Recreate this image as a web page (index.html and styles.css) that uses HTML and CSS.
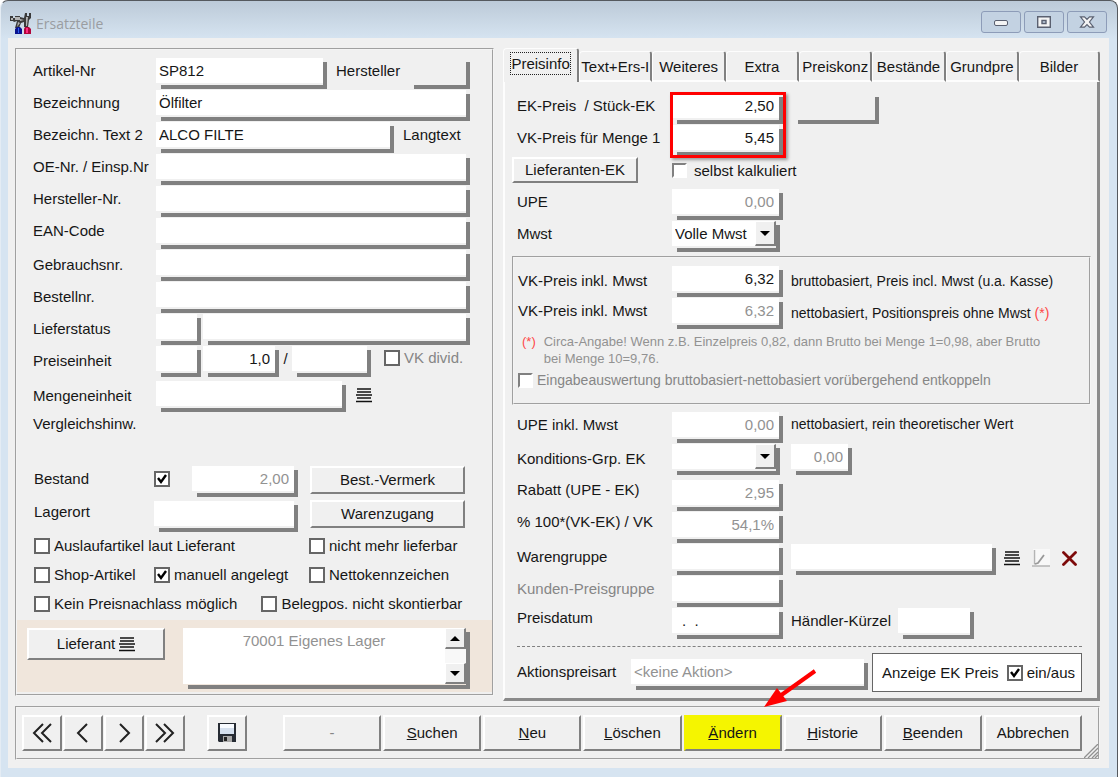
FILE: index.html
```html
<!DOCTYPE html>
<html lang="de">
<head>
<meta charset="utf-8">
<title>Ersatzteile</title>
<link rel="stylesheet" href="styles.css">
</head>
<body>
<div class="window">
  <header class="titlebar">
    <svg class="app-icon" viewBox="0 0 21 21" width="21" height="21" aria-hidden="true">
      <path d="M0 3h3v2h2V3h5v1l4 1 1-5h2v3h2V0h2v5l-2 2-1 7h-4V9l-3 1-2 5H5l2-7-3 1-1-1H0z" fill="#3a3a3a"/>
      <path d="M1 5h2v2H1zM5 4h5v3H5zM10 6l4 1-4 1zM16 4h2l-1 9h-1zM8 9l2 1-3 4z" fill="#b4b4b4"/>
      <path d="M5 21v-5l2-2h3l2 2v5z" fill="#0a1390"/><path d="M8 15h1v5H8z" fill="#2a62f0"/>
      <path d="M14 21v-5l1-2h4l2 2v5z" fill="#b0063a"/><path d="M16 15h2v5h-2z" fill="#ff2b83"/>
    </svg>
    <h1 class="title">Ersatzteile</h1>
    <div class="win-buttons">
      <button class="win-btn" aria-label="Minimieren"><svg viewBox="0 0 16 12" width="16" height="12"><rect x="1.500" y="4.500" width="13" height="5" rx="1.500" fill="#f4f4f4" stroke="#5a6070"/></svg></button>
      <button class="win-btn" aria-label="Maximieren"><svg viewBox="0 0 16 12" width="16" height="12"><path d="M1.700.7h12.600v10.600H1.700zM6 4.500v3h4v-3z" fill="#f4f4f4" stroke="#5a6070" fill-rule="evenodd" stroke-width="1.400"/></svg></button>
      <button class="win-btn" aria-label="Schließen"><svg viewBox="0 0 16 12" width="16" height="12"><path d="M1.500.8h4L8 3.300 10.500.8h4L10.500 6l4 5.200h-4L8 8.700l-2.500 2.500h-4L5.500 6z" fill="#f4f4f4" stroke="#5a6070" stroke-width="1.200"/></svg></button>
    </div>
  </header>

  <div class="content">
    <main class="columns">
      <section class="panel article">
        <div class="form">
          <div class="row"><label class="lbl" for="nr">Artikel-Nr</label><span class="field w-nr"><input id="nr" value="SP812"></span><label class="lbl-mid" for="her">Hersteller</label><span class="field flat push w-56"><input id="her"></span></div>
          <div class="row"><label class="lbl" for="bez">Bezeichnung</label><span class="field grow"><input id="bez" value="Ölfilter"></span></div>
          <div class="row"><label class="lbl" for="bez2">Bezeichn. Text 2</label><span class="field w-bez"><input id="bez2" value="ALCO FILTE"></span><span class="lbl-mid">Langtext</span></div>
          <div class="row"><label class="lbl" for="oe">OE-Nr. / Einsp.Nr</label><span class="field grow"><input id="oe"></span></div>
          <div class="row"><label class="lbl" for="hnr">Hersteller-Nr.</label><span class="field grow"><input id="hnr"></span></div>
          <div class="row"><label class="lbl" for="ean">EAN-Code</label><span class="field grow"><input id="ean"></span></div>
          <div class="row low"><label class="lbl" for="geb">Gebrauchsnr.</label><span class="field grow"><input id="geb"></span></div>
          <div class="row low"><label class="lbl" for="bnr">Bestellnr.</label><span class="field grow"><input id="bnr"></span></div>
          <div class="row low"><label class="lbl" for="ls">Lieferstatus</label><span class="field w-46"><input id="ls"></span><span class="field grow"><input aria-label="Lieferstatus Text"></span></div>
          <div class="row low"><label class="lbl" for="pe">Preiseinheit</label><span class="field w-46"><input id="pe"></span><span class="field w-76"><input class="num" value="1,0" aria-label="Menge"></span><span class="slash">/</span><span class="field w-80"><input aria-label="Einheit"></span><label class="check gray vk"><input type="checkbox" class="box">VK divid.</label></div>
          <div class="row low unit"><label class="lbl" for="me">Mengeneinheit</label><span class="field w-unit"><input id="me"></span>
            <button class="icon-btn" aria-label="Liste"><svg viewBox="0 0 16 15" width="16" height="15" stroke="#111" stroke-width="1.400"><path d="M1 1h14M0 7h16M0 13.500h16M1 4h14M1 10h14"/></svg></button></div>
          <div class="compare">Vergleichshinw.</div>

          <div class="stock">
            <div class="stock-fields">
              <div class="row"><label class="lbl-s" for="bst">Bestand</label><input type="checkbox" class="box" checked aria-label="Bestand führen"><span class="field push w-106"><input id="bst" class="num dim" value="2,00"></span></div>
              <div class="row"><label class="lbl-s up" for="lag">Lagerort</label><span class="field grow"><input id="lag"></span></div>
            </div>
            <div class="stock-buttons"><button class="btn">Best.-Vermerk</button><button class="btn">Warenzugang</button></div>
          </div>
          <div class="checks">
            <label class="check span2"><input type="checkbox" class="box">Auslaufartikel laut Lieferant</label><label class="check"><input type="checkbox" class="box">nicht mehr lieferbar</label>
            <label class="check"><input type="checkbox" class="box">Shop-Artikel</label><label class="check"><input type="checkbox" class="box" checked>manuell angelegt</label><label class="check"><input type="checkbox" class="box">Nettokennzeichen</label>
            <div class="check-pair"><label class="check"><input type="checkbox" class="box">Kein Preisnachlass möglich</label><label class="check"><input type="checkbox" class="box">Belegpos. nicht skontierbar</label></div>
          </div>
        </div>
        <div class="supplier">
          <button class="btn btn-sup">Lieferant <svg viewBox="0 0 16 15" width="16" height="15" stroke="#111" stroke-width="1.400"><path d="M1 1h14M1 4h14M0 7h16M1 10h14M0 13.500h16"/></svg></button>
          <span class="field memo"><textarea aria-label="Lieferant" rows="3">70001 Eigenes Lager</textarea>
            <span class="scroll"><button class="spin" aria-label="Nach oben"><svg viewBox="0 0 10 5" width="10" height="5"><path d="M5 0l5 5H0z"/></svg></button><button class="spin" aria-label="Nach unten"><svg viewBox="0 0 10 5" width="10" height="5"><path d="M0 0h10L5 5z"/></svg></button></span></span>
        </div>
      </section>

      <section class="prices">
        <nav class="tabs">
          <button class="tab active"><span>Preisinfo</span></button><button class="tab">Text+Ers-I</button><button class="tab">Weiteres</button><button class="tab">Extra</button><button class="tab">Preiskonz</button><button class="tab">Bestände</button><button class="tab">Grundpre</button><button class="tab last">Bilder</button>
        </nav>
        <div class="tab-body">
          <div class="marked">
            <div class="row"><label class="lbl-r" for="ek">EK-Preis&nbsp; / Stück-EK</label><span class="field w-112"><input id="ek" class="num" value="2,50"></span><span class="field flat w-86"><input aria-label="Stück-EK"></span></div>
            <div class="row"><label class="lbl-r" for="vk">VK-Preis für Menge 1</label><span class="field w-112"><input id="vk" class="num" value="5,45"></span></div>
            <div class="mark"></div>
          </div>
          <div class="row calc"><span class="lbl-r"><button class="btn btn-ek">Lieferanten-EK</button></span><label class="check wide"><input type="checkbox" class="sunken">selbst kalkuliert</label></div>
          <div class="row"><label class="lbl-r" for="upe">UPE</label><span class="field w-112"><input id="upe" class="num dim" value="0,00"></span></div>
          <div class="row"><label class="lbl-r" for="mw">Mwst</label><span class="field combo"><select id="mw"><option>Volle Mwst</option></select><span class="spin drop"><svg viewBox="0 0 10 5" width="10" height="5"><path d="M0 0h10L5 5z"/></svg></span></span></div>

          <div class="group">
            <div class="row low"><label class="lbl-r" for="v1">VK-Preis inkl. Mwst</label><span class="field w-112"><input id="v1" class="num" value="6,32"></span><span class="note">bruttobasiert, Preis incl. Mwst (u.a. Kasse)</span></div>
            <div class="row"><label class="lbl-r" for="v2">VK-Preis inkl. Mwst</label><span class="field w-112"><input id="v2" class="num dim" value="6,32"></span><span class="note">nettobasiert, Positionspreis ohne Mwst <span class="star">(*)</span></span></div>
            <div class="hint"><span class="star">(*)</span><p>Circa-Angabe! Wenn z.B. Einzelpreis 0,82, dann Brutto bei Menge 1=0,98, aber Brutto<br>bei Menge 10=9,76.</p></div>
            <label class="check small gray"><input type="checkbox" class="sunken">Eingabeauswertung bruttobasiert-nettobasiert vorübergehend entkoppeln</label>
          </div>

          <div class="row"><label class="lbl-r" for="ui">UPE inkl. Mwst</label><span class="field w-112"><input id="ui" class="num dim" value="0,00"></span><span class="note tight">nettobasiert, rein theoretischer Wert</span></div>
          <div class="row low terms"><label class="lbl-r" for="kg">Konditions-Grp. EK</label><span class="field combo"><select id="kg"><option></option></select><span class="spin drop"><svg viewBox="0 0 10 5" width="10" height="5"><path d="M0 0h10L5 5z"/></svg></span></span><span class="field w-60"><input class="num dim" value="0,00" aria-label="Kondition"></span></div>
          <div class="row high"><label class="lbl-r" for="rb">Rabatt (UPE - EK)</label><span class="field w-112"><input id="rb" class="num dim" value="2,95"></span></div>
          <div class="row high"><label class="lbl-r" for="pc">% 100*(VK-EK) / VK</label><span class="field w-112"><input id="pc" class="num dim" value="54,1%"></span></div>
          <div class="row"><label class="lbl-r" for="wg">Warengruppe</label><span class="field w-112"><input id="wg"></span><span class="field grow"><input aria-label="Warengruppe Text"></span>
            <span class="tools">
              <button class="icon-btn" aria-label="Liste"><svg viewBox="0 0 16 15" width="16" height="15" stroke="#111" stroke-width="1.400"><path d="M1 1h14M1 4h14M0 7h16M1 10h14M0 13.500h16"/></svg></button>
              <button class="icon-btn" aria-label="Bearbeiten"><svg viewBox="0 0 18 18" width="18" height="18" fill="none"><path d="M1 0h17v17H1z" fill="#f8f8f8"/><path d="M2.500 1v14.500M0 17h18" stroke="#b4b4b4" stroke-width="1.500"/><path d="M3 15l3-1 6-8" stroke="#999" stroke-width="1.800"/></svg></button>
              <button class="icon-btn" aria-label="Löschen"><svg viewBox="0 0 15 15" width="15" height="15"><path d="M1.500 1.500l12 12M13.500 1.500l-12 12" stroke="#7d0a0a" stroke-width="2.800" stroke-linecap="round"/></svg></button>
            </span></div>
          <div class="row"><label class="lbl-r gray" for="kp">Kunden-Preisgruppe</label><span class="field w-112"><input id="kp"></span></div>
          <div class="row high"><label class="lbl-r" for="pd">Preisdatum</label><span class="field w-112"><input id="pd" class="date" value=".  ."></span><label class="dealer" for="hk">Händler-Kürzel</label><span class="field w-76"><input id="hk"></span></div>
          <div class="promo">
            <label class="lbl-p" for="ak">Aktionspreisart</label><span class="field grow"><input id="ak" class="dim" value="&lt;keine Aktion&gt;"></span>
            <div class="ek-toggle"><span>Anzeige EK Preis</span><label class="check"><input type="checkbox" class="box" checked>ein/aus</label></div>
          </div>
        </div>
      </section>
    </main>

    <footer class="toolbar">
      <div class="nav">
        <button class="btn" aria-label="Erster"><svg viewBox="0 0 20 20" width="20" height="20"><path d="M11 1L2 10l9 9M19 1l-9 9 9 9"/></svg></button>
        <button class="btn" aria-label="Zurück"><svg viewBox="0 0 20 20" width="20" height="20"><path d="M14 1l-9 9 9 9"/></svg></button>
        <button class="btn" aria-label="Weiter"><svg viewBox="0 0 20 20" width="20" height="20"><path d="M6 1l9 9-9 9"/></svg></button>
        <button class="btn" aria-label="Letzter"><svg viewBox="0 0 20 20" width="20" height="20"><path d="M1 1l9 9-9 9M9 1l9 9-9 9"/></svg></button>
      </div>
      <button class="btn save" aria-label="Speichern"><svg class="disk" viewBox="0 0 20 20" width="20" height="20"><path d="M1 0h18v19H2l-1-1z" fill="#262b33"/><path d="M3 1h14v10H3z" fill="#d5e0ee"/><path d="M3 1h14v4H3z" fill="#f8fbff"/><path d="M6 13h9v6H6z" fill="#a9a9a9"/><path d="M7 14h3v4H7z" fill="#222"/></svg></button>
      <div class="actions">
        <button class="btn gray">-</button>
        <button class="btn"><u>S</u>uchen</button>
        <button class="btn"><u>N</u>eu</button>
        <button class="btn"><u>L</u>öschen</button>
        <button class="btn hot"><u>Ä</u>ndern<svg class="arrow" viewBox="0 0 54 40" width="54" height="40" aria-hidden="true"><path d="M51 2L16 27" stroke="#f00" stroke-width="4"/><path d="M0 38l13-19 10 13z" fill="#f00"/></svg></button>
        <button class="btn"><u>H</u>istorie</button>
        <button class="btn"><u>B</u>eenden</button>
        <button class="btn">Abbrechen</button>
      </div>
      <svg class="grip" viewBox="0 0 14 14" width="14" height="14" aria-hidden="true"><path d="M0 14L14 0M4 14L14 4M8 14l6-6M11 14l3-3" stroke="#909090" stroke-width="1.300"/></svg>
    </footer>
  </div>
</div>
</body>
</html>
```
FILE: styles.css
```css
* { box-sizing: border-box; }
body { margin: 0; background: #fff; font: 15px/25px "Liberation Sans", Arial, sans-serif; color: #161616; }
button, input, select, textarea { font: inherit; color: inherit; border: 0; margin: 0; padding: 0; background: none; border-radius: 0; }
p { margin: 0; }

.window { display: flex; flex-direction: column; min-height: 100vh; padding: 0 8px 9px 7px; border: 1px solid #55595e; border-left-color: #e4ecf4; border-bottom: 0; border-radius: 8px 8px 0 0; background: linear-gradient(#bccad8, #d6e4f1 38px); }
.titlebar { display: flex; align-items: center; height: 37px; padding: 8px 2px 0; gap: 5px; }
.title { flex: 1; margin: 0; font: 14px/18px "Open Sans", sans-serif; color: #9a9da1; }
.win-buttons { display: flex; gap: 3px; margin-bottom: 4px; }
.win-btn { display: flex; align-items: center; justify-content: center; width: 40px; height: 22px; border: 1px solid #8d9cb8; border-radius: 3px; background: #c3d2e2; }

.content { flex: 1; display: flex; flex-direction: column; gap: 5px; padding: 10px 9px 7px 7px; background: #f0f0f0; }
.columns { display: flex; gap: 9px; }
.panel { flex: 475; display: flex; flex-direction: column; min-width: 0; margin-bottom: 5px; border: 2px groove #f4f4f4; }
.form { padding: 8px 22px 0 16px; }
.prices { flex: 597; display: flex; flex-direction: column; min-width: 0; }

.row { display: flex; align-items: flex-start; height: 32px; }
.lbl { width: 123px; flex: none; white-space: nowrap; }
.low > .lbl, .low > .lbl-r { line-height: 30px; }
.high > .lbl-r { line-height: 20px; }
.lbl-mid { margin-left: 9px; }
.gray { color: #868686; }
.push { margin-left: auto; }
.grow { flex: 1; min-width: 0; }

/* White entry box with a detached drop edge at the right and bottom */
.field { display: flex; height: 31px; padding: 0 4px 6px 0;
  background: linear-gradient(#808080, #808080) 5px 100% / 100% 4px no-repeat, linear-gradient(#808080, #808080) 100% 4px / 4px 100% no-repeat; }
.field input { width: 100%; min-width: 0; height: 25px; padding: 0 3px; background: #fff; }
.field.flat input { background: #f0f0f0; }
.field .num { text-align: right; padding-right: 5px; }
.field .dim { color: #929292; }
.field .date { padding-left: 10px; white-space: pre; }
.w-nr { width: 171px; }
.w-bez { width: 238px; }
.w-unit { width: 190px; }
.w-46 { width: 45px; margin-right: 2px; }
.w-56 { width: 61px; }
.w-60 { width: 61px; margin-left: 11px; }
.w-76 { width: 76px; }
.w-80 { width: 79px; }
.w-86 { width: 86px; margin-left: 10px; }
.w-106 { width: 106px; }
.w-112 { width: 111px; flex: none; }
.w-112 + .grow { margin-left: 8px; }
.slash { width: 13px; text-align: center; }

.box, .sunken { appearance: none; flex: none; width: 16px; height: 16px; border: 2px solid #666; background: #fff; }
.box:checked { background: #fff url("data:image/svg+xml,%3Csvg xmlns='http://www.w3.org/2000/svg' viewBox='0 0 12 12'%3E%3Cpath d='M2 5l3 4 5-7' fill='none' stroke='%23000' stroke-width='2.400'/%3E%3C/svg%3E"); }
.sunken { width: 15px; height: 15px; border: 2px solid #808080; border-right-color: #fff; border-bottom-color: #fff; }
.check { display: flex; align-items: center; gap: 4px; white-space: nowrap; }
.vk { height: 23px; margin-left: 13px; }
.unit { margin-top: 3px; }
.icon-btn { display: flex; }
.unit .icon-btn { margin: 7px 0 0 10px; }
.compare { line-height: 22px; margin-bottom: 31px; }

.stock { display: flex; gap: 12px; padding: 0 5px 0 1px; }
.stock-fields { width: 264px; display: flex; flex-direction: column; gap: 3px; }
.stock-fields .box { margin-top: 5px; }
.lbl-s { width: 120px; flex: none; }
.lbl-s.up { line-height: 22px; }
.stock-buttons { flex: 1; display: flex; flex-direction: column; gap: 6px; }
.stock-buttons .btn { height: 28px; }
.checks { display: grid; grid-template-columns: 120px 155px 1fr; grid-auto-rows: 29px; padding-left: 1px; margin: -2px -20px 2px 0; }
.span2 { grid-column: span 2; }
.check-pair { grid-column: span 3; display: flex; gap: 24px; }

.btn { display: flex; align-items: center; justify-content: center; border: 2px solid #fff; border-right-color: #808080; border-bottom-color: #808080; background: #f0f0f0; line-height: 20px; white-space: nowrap; }
.supplier { flex: 1; display: flex; align-items: flex-start; gap: 18px; padding: 8px 22px 0 10px; margin-bottom: 2px; background: #f0e6dc; }
.btn-sup { width: 138px; height: 32px; gap: 4px; }
.memo { flex: 1; height: 61px; min-width: 0; padding-bottom: 5px; }
.memo textarea { flex: 1; min-width: 0; height: 56px; resize: none; text-align: center; color: #929292; background: #fff; overflow: hidden; }
.scroll { display: flex; flex-direction: column; justify-content: space-between; background: #f8f8f8; }
.spin { display: flex; align-items: center; justify-content: center; width: 21px; height: 21px; border: 1px solid #fff; border-right: 2px solid #808080; border-bottom: 2px solid #808080; background: #f0f0f0; }

.tabs { display: flex; align-items: flex-end; height: 34px; }
.tab { flex: 73; min-width: 0; height: 31px; overflow: hidden; white-space: nowrap; border: 2px solid #fdfdfd; border-right-color: #808080; border-width: 1px 2px 0 1px; border-radius: 4px 3px 0 0; border-bottom: 2px solid #fdfdfd; }
.tab.last { flex: 81; }
.tab.active { flex: 76; height: 34px; border-bottom: 0; padding-bottom: 4px; }
.tab.active span { display: inline-block; line-height: 21px; outline: 1px dotted #222; }
.tab-body { flex: 1; padding: 11px 8px 0 9px; border-left: 2px solid #fdfdfd; border-right: 3px solid #8a8a8a; border-bottom: 3px solid #8a8a8a; }
.tab-body > .row, .marked { padding-left: 3px; }
.lbl-r { width: 155px; flex: none; white-space: nowrap; }
.marked { position: relative; }
.mark { position: absolute; left: 156px; top: -1px; width: 116px; height: 66px; border: 3px solid #f00; box-shadow: 2px 2px 3px #999; }
.btn-ek { width: 126px; height: 26px; margin-left: -5px; }
.calc .wide { gap: 7px; height: 26px; }
.combo { width: 108px; }
.combo select { appearance: none; flex: 1; min-width: 0; height: 25px; padding: 0 3px; background: #fff; line-height: 25px; }
.drop { height: 25px; }

.group { margin: 3px -2px 7px; padding: 8px 4px 10px; border: 2px groove #f4f4f4; }
.group .lbl-r { width: 154px; }
.note { margin-left: 8px; font-size: 14px; line-height: 30px; white-space: nowrap; }
.note.tight { line-height: 25px; }
.star { color: #ff4747; }
.hint { display: flex; gap: 8px; padding: 3px 0 0 4px; font-size: 13px; line-height: 17px; color: #929292; white-space: nowrap; }
.small { font-size: 14px; line-height: 26px; }
.terms { height: 36px; }
.tools { display: flex; align-items: center; gap: 12px; height: 28px; margin: 0 12px 0 8px; }
.dealer { margin: 0 7px 0 8px; }
.promo { display: flex; align-items: flex-start; margin: 6px 7px 0 3px; padding-top: 6px; height: 52px; border-top: 1px dashed #808080; }
.lbl-p { width: 114px; margin-top: 6px; }
.promo .field { margin-top: 6px; }
.ek-toggle { display: flex; align-items: center; gap: 8px; height: 39px; margin-left: 4px; padding: 0 6px 0 9px; border: 1px solid #666; background: #fff; }

.toolbar { position: relative; display: flex; align-items: center; height: 54px; padding: 0 16px 0 5px; border: 2px groove #f4f4f4; }
.toolbar .btn { height: 36px; }
.nav { display: flex; gap: 1px; }
.nav .btn, .save { width: 40px; }
.nav svg { fill: none; stroke: #222; stroke-width: 2; }
.save { margin: 0 36px 0 22px; }
.actions { flex: 1; display: flex; gap: 2px; }
.actions .btn { flex: 1; min-width: 0; }
.toolbar .hot { position: relative; background: #f5f500; border-left-color: #f5f500; border-top-color: #f5f500; }
.arrow { position: absolute; left: 78px; top: -48px; }
.grip { position: absolute; right: 0; bottom: 0; }
```
